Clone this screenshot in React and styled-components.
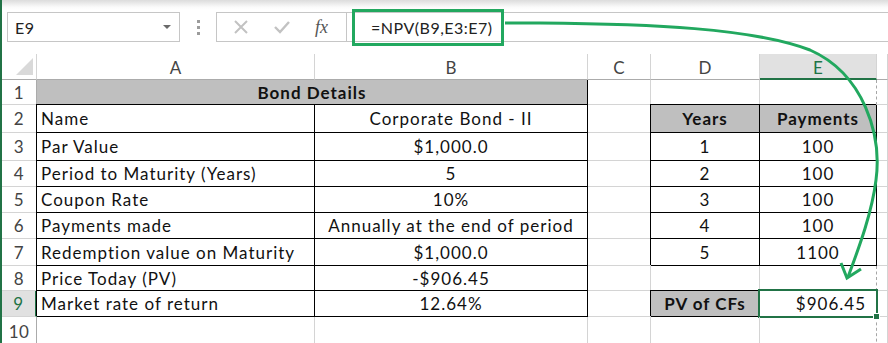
import styled, { createGlobalStyle } from "styled-components";

const Global = createGlobalStyle`
  body { margin: 0; background: #fff; }
`

const Window = styled.div`
  position: relative;
  width: 888px;
  height: 343px;
  overflow: hidden;
  box-sizing: border-box;
  border-left: 2px solid #217346;
  font-family: Lato, "Liberation Sans", sans-serif;
  color: #111;
`

const Shade = styled.div`
  height: 10px;
  background: linear-gradient(#dcdcdc, #fafafa 70%, #fff);
`

const FormulaBar = styled.div`
  display: flex;
  align-items: center;
  height: 30px;
  margin-top: 2px;
  padding-left: 5px;
`

const NameBox = styled.div`
  box-sizing: border-box;
  width: 173px;
  height: 30px;
  border: 1px solid #c6c6c6;
  display: flex;
  align-items: center;
  justify-content: space-between;
  padding: 0 8px 0 7px;
  font-size: 16px;
  letter-spacing: 0.4px;
  color: #222;
`

const Caret = styled.span`
  width: 0;
  height: 0;
  border-left: 4px solid transparent;
  border-right: 4px solid transparent;
  border-top: 4px solid #6a6a6a;
`

const Dots = styled.div`
  display: flex;
  flex-direction: column;
  gap: 3px;
  margin: 0 16px 0 17px;
  span {
    width: 3px;
    height: 3px;
    background: #9c9c9c;
  }
`

const IconBox = styled.div`
  box-sizing: border-box;
  width: 131px;
  height: 30px;
  border: 1px solid #c6c6c6;
  display: flex;
  align-items: center;
  justify-content: space-around;
  padding: 0 6px 0 4px;
`

const Fx = styled.span`
  font-family: "Liberation Serif", serif;
  font-style: italic;
  font-size: 18px;
  color: #555;
`

const Input = styled.div`
  flex: 1;
  box-sizing: border-box;
  height: 30px;
  border-top: 1px solid #c6c6c6;
  border-bottom: 1px solid #c6c6c6;
  display: flex;
  align-items: center;
  padding-left: 5px;
`

const Highlight = styled.div`
  box-sizing: border-box;
  height: 37px;
  margin-top: 1px;
  width: 152px;
  border: 3px solid #22a85f;
  display: flex;
  align-items: center;
  padding-left: 16px;
  font-size: 16px;
  letter-spacing: 0.5px;
  color: #222;
`

const Sheet = styled.div`
  display: grid;
  grid-template-columns: 35px 278px 273px 63px 109px 117px 11px;
  grid-template-rows: 26px 25px 28px 28px 26px 26px 26px 27px 25px 26px 30px;
  margin-top: 12px;
  font-size: 17px;
`

const Corner = styled.div`
  position: relative;
  border-right: 1px solid #d4d4d4;
  border-bottom: 1px solid #ababab;
  &::after {
    content: "";
    position: absolute;
    right: 3px;
    bottom: 4px;
    border-left: 17px solid transparent;
    border-bottom: 17px solid #d9d9d9;
  }
`

const ColHead = styled.div`
  display: flex;
  align-items: center;
  justify-content: center;
  box-sizing: border-box;
  padding-top: 2px;
  border-right: 1px solid #d4d4d4;
  border-bottom: ${p => (p.$active ? "2px solid #217346" : "1px solid #ababab")};
  background: ${p => (p.$active ? "#e1e1e1" : "#fff")};
  color: ${p => (p.$active ? "#217346" : "#444")};
`

const RowHead = styled.div`
  display: flex;
  align-items: center;
  justify-content: center;
  box-sizing: border-box;
  letter-spacing: 0.5px;
  border-right: ${p => (p.$active ? "2px solid #217346" : "1px solid #ababab")};
  border-bottom: 1px solid #d4d4d4;
  background: ${p => (p.$active ? "#e1e1e1" : "#fff")};
  color: ${p => (p.$active ? "#217346" : "#444")};
`

const justify = { left: "flex-start", center: "center", right: "flex-end" }

const Cell = styled.div`
  position: relative;
  display: flex;
  align-items: center;
  box-sizing: border-box;
  white-space: nowrap;
  letter-spacing: 1px;
  grid-column: span ${p => p.$span || 1};
  justify-content: ${p => justify[p.$align || "left"]};
  padding: 0 ${p => (p.$align === "right" ? "10px" : "4px")};
  font-weight: ${p => (p.$bold ? 700 : 400)};
  background: ${p => (p.$fill ? "#bfbfbf" : "transparent")};
  border-right: 1px ${p => (p.$box ? "solid #000" : p.$dashed ? "dashed #a6a6a6" : "solid #d4d4d4")};
  border-bottom: 1px solid ${p => (p.$box ? "#000" : "#d4d4d4")};
  box-shadow: ${p => (p.$box === "full" ? "-1px -1px 0 #000" : "none")};
  ${p => p.$selected && `
    &::after {
      content: "";
      position: absolute;
      top: -2px; left: -2px; right: -2px; bottom: -2px;
      border: 2px solid #217346;
    }
    &::before {
      content: "";
      position: absolute;
      right: -4px; bottom: -4px;
      width: 5px; height: 5px;
      background: #217346;
      border: 1px solid #fff;
      z-index: 1;
    }
  `}
`

const Arrow = styled.svg`
  position: absolute;
  left: -2px;
  top: 0;
  pointer-events: none;
`

const bond = [
  ["Name", "Corporate Bond - II"],
  ["Par Value", "$1,000.0"],
  ["Period to Maturity (Years)", "5"],
  ["Coupon Rate", "10%"],
  ["Payments made", "Annually at the end of period"],
  ["Redemption value on Maturity", "$1,000.0"],
  ["Price Today (PV)", "-$906.45"],
  ["Market rate of return", "12.64%"],
]

const payments = [["1", "100"], ["2", "100"], ["3", "100"], ["4", "100"], ["5", "1100"]]

function rightSide(i) {
  // i: index of the bond row (row number - 2)
  if (i === 0)
    return [
      <Cell key="d" $box="full" $fill $bold $align="center">Years</Cell>,
      <Cell key="e" $box="full" $fill $bold $align="center">Payments</Cell>,
    ]
  if (i >= 1 && i <= 5)
    return [
      <Cell key="d" $box="full" $align="center">{payments[i - 1][0]}</Cell>,
      <Cell key="e" $box="full" $align="center">{payments[i - 1][1]}</Cell>,
    ]
  if (i === 7)
    return [
      <Cell key="d" $box="full" $fill $bold $align="center">PV of CFs</Cell>,
      <Cell key="e" $box="full" $align="right" $selected>$906.45</Cell>,
    ]
  return [<Cell key="d" />, <Cell key="e" $dashed />]
}

export default function App() {
  return (
    <Window>
      <Global />
      <Shade />
      <FormulaBar>
        <NameBox>
          E9
          <Caret />
        </NameBox>
        <Dots>
          <span />
          <span />
          <span />
        </Dots>
        <IconBox>
          <svg width="16" height="16" viewBox="0 0 16 16">
            <path d="M2 2 L14 14 M14 2 L2 14" stroke="#c2c2c2" strokeWidth="2" fill="none" />
          </svg>
          <svg width="18" height="16" viewBox="0 0 18 16">
            <path d="M2 8 L7 13 L16 3" stroke="#c2c2c2" strokeWidth="2.4" fill="none" />
          </svg>
          <Fx>fx</Fx>
        </IconBox>
        <Input>
          <Highlight>=NPV(B9,E3:E7)</Highlight>
        </Input>
      </FormulaBar>

      <Sheet>
        <Corner />
        <ColHead>A</ColHead>
        <ColHead>B</ColHead>
        <ColHead>C</ColHead>
        <ColHead>D</ColHead>
        <ColHead $active>E</ColHead>
        <ColHead />

        <RowHead>1</RowHead>
        <Cell $span={2} $box="rb" $fill $bold $align="center">Bond Details</Cell>
        <Cell />
        <Cell />
        <Cell $dashed />
        <Cell />

        {bond.map(([label, value], i) => [
          <RowHead key={`h${i}`} $active={i === 7}>{i + 2}</RowHead>,
          <Cell key={`a${i}`} $box="full">{label}</Cell>,
          <Cell key={`b${i}`} $box="full" $align="center">{value}</Cell>,
          <Cell key={`c${i}`} />,
          ...rightSide(i).map(c => ({ ...c, key: `${c.key}${i}` })),
          <Cell key={`f${i}`} />,
        ])}

        <RowHead>10</RowHead>
        <Cell />
        <Cell />
        <Cell />
        <Cell />
        <Cell $dashed />
        <Cell />
      </Sheet>

      <Arrow width="888" height="343" viewBox="0 0 888 343">
        <path
          d="M505 23 L540 23 C650 24 752 28 810 50 C864 74 882 135 876 180 C872 212 860 245 848 277"
          stroke="#22a85f"
          strokeWidth="3"
          fill="none"
        />
        <path d="M841 263 L847 278 L861 269" stroke="#22a85f" strokeWidth="3" fill="none" />
      </Arrow>
    </Window>
  )
}
